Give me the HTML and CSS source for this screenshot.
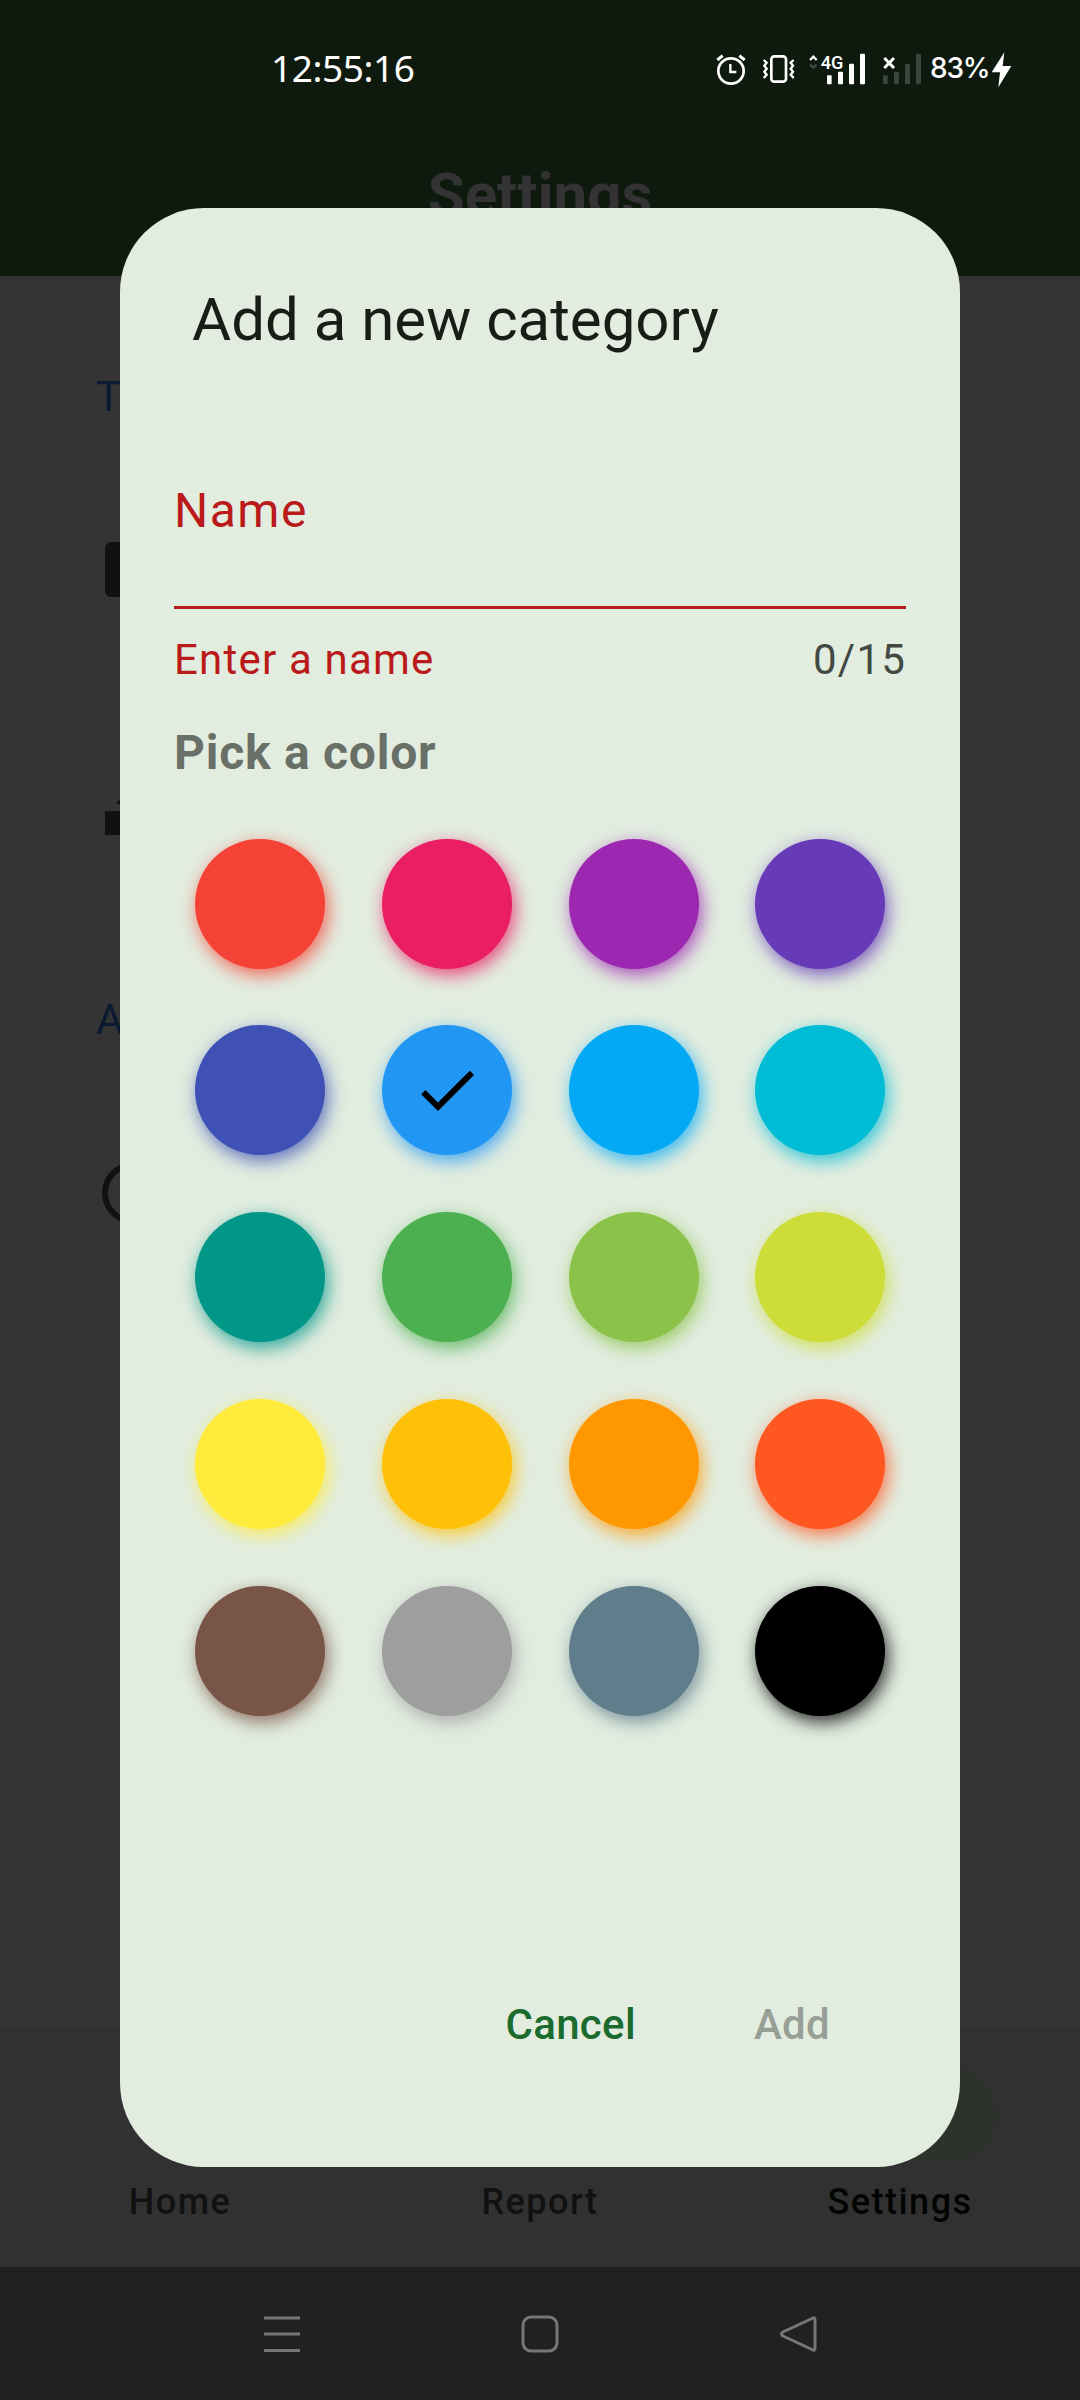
FILE: index.html
```html
<!DOCTYPE html>
<html lang="en">
<head>
<meta charset="utf-8">
<title>Settings</title>
<link rel="stylesheet" href="styles.css">
</head>
<body>
<div class="screen">
  <header class="app-header">
    <div class="status">
      <span class="clock">12:55:16</span>
      <div class="status-icons">
        <svg class="alarm" viewBox="78 69 90 102" width="30" height="34" fill="none" stroke="#fff" stroke-width="8"><circle cx="123" cy="123" r="38"/><path d="M121 102v24h18" stroke-width="7"/><path d="M82 90l16-13M164 90l-16-13" stroke-width="9"/></svg>
        <svg class="vibrate" viewBox="216 69 99 102" width="33" height="34" fill="none" stroke="#fff" stroke-width="8"><rect x="244" y="79" width="44" height="76" rx="9"/><path d="M221 90l9 8-7 9 7 9-7 9 7 9-9 10M311 90l-9 8 7 9-7 9 7 9-7 9 9 10" stroke-width="7"/></svg>
        <svg class="signal" viewBox="354 69 174 102" width="58" height="34"><path d="M360 90l10-10 10 10" fill="none" stroke="#fff" stroke-width="7"/><path d="M360 104l10 9 10-9" fill="none" stroke="#3f483f" stroke-width="7"/><text x="392" y="117" class="network" textLength="68" lengthAdjust="spacingAndGlyphs">4G</text><g fill="#fff"><rect x="411" y="136" width="14" height="27" rx="3"/><rect x="444" y="125" width="15" height="38" rx="3"/><rect x="477" y="101" width="15" height="62" rx="3"/><rect x="510" y="71" width="15" height="92" rx="3"/></g></svg>
        <svg class="no-sim" viewBox="576 69 120 102" width="40" height="34"><g fill="#3c453c"><rect x="579" y="136" width="14" height="27" rx="3"/><rect x="612" y="125" width="15" height="38" rx="3"/><rect x="645" y="101" width="15" height="62" rx="3"/><rect x="678" y="71" width="15" height="92" rx="3"/></g><path d="M583 84l29 30M612 84l-29 30" stroke="#fff" stroke-width="9"/></svg>
        <span class="battery">83%</span>
        <svg class="bolt" viewBox="903 66 63 108" width="21" height="36"><path d="M943 67L905 127H930L925 172L964 108H938Z" fill="#fff"/></svg>
      </div>
    </div>
    <h1 class="page-title">Settings</h1>
  </header>

  <main class="settings">
    <div class="section">T</div>
    <svg class="setting-icon card" width="60" height="55"><rect width="60" height="55" rx="6"/></svg>
    <svg class="setting-icon pen" width="60" height="40"><path d="M0 16h60v24H0zM11 9l7-9h12v9z"/></svg>
    <div class="section second">A</div>
    <svg class="setting-icon info" width="62" height="62" viewBox="0 0 62 62"><circle cx="31" cy="31" r="28" fill="none" stroke="#111" stroke-width="6"/></svg>
  </main>

  <nav class="tabs">
    <div class="tab"><span class="pill"></span><span>Home</span></div>
    <div class="tab"><span class="pill"></span><span>Report</span></div>
    <div class="tab active"><span class="pill"></span><span>Settings</span></div>
  </nav>

  <footer class="system-nav">
    <svg width="38" height="38" viewBox="0 0 38 38"><path d="M1 3h36M1 19h36M1 35.500h36"/></svg>
    <svg width="38" height="38" viewBox="0 0 38 38"><rect x="2" y="2" width="34" height="34" rx="8"/></svg>
    <svg width="38" height="38" viewBox="0 0 38 38"><path d="M33 3.500Q36 1.500 36 5V33Q36 36.500 33 34.500L4 21Q1 19 4 17Z"/></svg>
  </footer>

  <section class="dialog">
    <h2 class="dialog-title">Add a new category</h2>
    <div class="field"><span class="label">Name</span></div>
    <div class="helper"><span class="error">Enter a name</span><span class="count">0/15</span></div>
    <h3 class="pick">Pick a color</h3>
    <div class="swatches">
      <i class="swatch red"></i><i class="swatch pink"></i><i class="swatch purple"></i><i class="swatch deep-purple"></i>
      <i class="swatch indigo"></i><i class="swatch blue"><svg width="72" height="72" viewBox="0 0 24 24"><path d="M9 16.200L4.800 12l-1.400 1.400L9 19 21 7l-1.400-1.400z"/></svg></i><i class="swatch light-blue"></i><i class="swatch cyan"></i>
      <i class="swatch teal"></i><i class="swatch green"></i><i class="swatch light-green"></i><i class="swatch lime"></i>
      <i class="swatch yellow"></i><i class="swatch amber"></i><i class="swatch orange"></i><i class="swatch deep-orange"></i>
      <i class="swatch brown"></i><i class="swatch grey"></i><i class="swatch blue-grey"></i><i class="swatch black"></i>
    </div>
    <div class="actions"><span class="cancel">Cancel</span><span class="add">Add</span></div>
  </section>
</div>
</body>
</html>
```
FILE: styles.css
```css
* { box-sizing: border-box; }
body { margin: 0; font-family: Roboto, sans-serif; background: #333; }
h1, h2, h3 { margin: 0; font-weight: 400; }
svg { display: block; flex: none; }

.screen { position: relative; width: 1080px; height: 2400px; overflow: hidden; display: flex; flex-direction: column; }

.app-header { height: 276px; flex: none; background: #0f1a0f; display: flex; flex-direction: column; }
.status { height: 140px; padding: 0 68px 0 271px; display: flex; justify-content: space-between; align-items: flex-start; color: #fff; }
.clock { margin-top: 46px; font: 400 37px/44px "Noto Sans", sans-serif; letter-spacing: -0.4px; }
.status-icons { display: flex; align-items: flex-start; padding-top: 53px; }
.vibrate { margin-left: 16px; }
.signal { margin-left: 13px; }
.no-sim { margin-left: 16px; }
.network { font: 500 56px Roboto, sans-serif; fill: #fff; }
.battery { width: 60px; margin-left: 8px; font: 500 28px/30px Inter, sans-serif; letter-spacing: -1.2px; white-space: nowrap; }
.bolt { margin-left: 1px; margin-top: -1px; }
.page-title { text-align: center; font-size: 60px; line-height: 70px; font-weight: 700; color: #333; padding-top: 20px; }

.settings { flex: 1; background: #343434; padding: 96px 0 0 96px; }
.section { font-size: 42px; line-height: 50px; color: #0a1a30; }
.section.second { margin-top: 160px; }
.setting-icon { margin-left: 9px; fill: #111; }
.card { margin-top: 120px; }
.pen { margin-top: 198px; }
.info { margin: 117px 0 0 6px; }

.tabs { height: 238px; flex: none; background: #313131; display: flex; padding-top: 37px; }
.tab { flex: 1; display: flex; flex-direction: column; align-items: center; gap: 19px; font-size: 36px; line-height: 42px; font-weight: 500; letter-spacing: 1.5px; color: #111; }
.pill { width: 192px; height: 96px; border-radius: 48px; }
.active { color: #030503; }
.active .pill { background: #2c332b; }

.system-nav { height: 133px; flex: none; background: #212121; display: flex; justify-content: center; gap: 220px; padding-top: 48px; }
.system-nav svg { fill: none; stroke: #767676; stroke-width: 3; }

.dialog { position: absolute; left: 120px; top: 208px; width: 840px; height: 1959px; border-radius: 84px; background: #e2ede0; padding: 76px 54px 0; display: flex; flex-direction: column; }
.dialog-title { padding-left: 18px; font-size: 60px; line-height: 72px; color: #191d18; }
.field { margin-top: 127px; height: 126px; border-bottom: 3px solid #ba1a1a; }
.label { display: block; font-size: 48px; line-height: 56px; letter-spacing: 1.5px; color: #ba1a1a; }
.helper { margin-top: 26px; display: flex; justify-content: space-between; font-size: 42px; line-height: 50px; letter-spacing: 1.2px; }
.error { color: #ba1a1a; }
.count { color: #414941; }
.pick { margin-top: 40px; font-size: 48px; line-height: 56px; font-weight: 700; letter-spacing: 0.75px; color: #697067; }
.swatches { margin: 57.500px 0 0 21px; display: grid; grid-template-columns: repeat(4, 130px); grid-auto-rows: 130px; gap: 56.800px; }
.swatch { border-radius: 50%; background: var(--c); box-shadow: 3px 6px 18px color-mix(in srgb, var(--c) 80%, transparent); display: flex; align-items: center; justify-content: center; }
.red { --c: #f44336; }
.pink { --c: #e91e63; }
.purple { --c: #9c27b0; }
.deep-purple { --c: #673ab7; }
.indigo { --c: #3f51b5; }
.blue { --c: #2196f3; }
.light-blue { --c: #03a9f4; }
.cyan { --c: #00bcd4; }
.teal { --c: #009688; }
.green { --c: #4caf50; }
.light-green { --c: #8bc34a; }
.lime { --c: #cddc39; }
.yellow { --c: #ffeb3b; }
.amber { --c: #ffc107; }
.orange { --c: #ff9800; }
.deep-orange { --c: #ff5722; }
.brown { --c: #795548; }
.grey { --c: #9e9e9e; }
.blue-grey { --c: #607d8b; }
.black { --c: #000; }
.actions { margin-top: 284px; padding-right: 76px; display: flex; justify-content: flex-end; gap: 118px; font-size: 42px; line-height: 50px; font-weight: 500; letter-spacing: 0.3px; }
.cancel { color: #1b6b2f; }
.add { color: #969e95; }
```
